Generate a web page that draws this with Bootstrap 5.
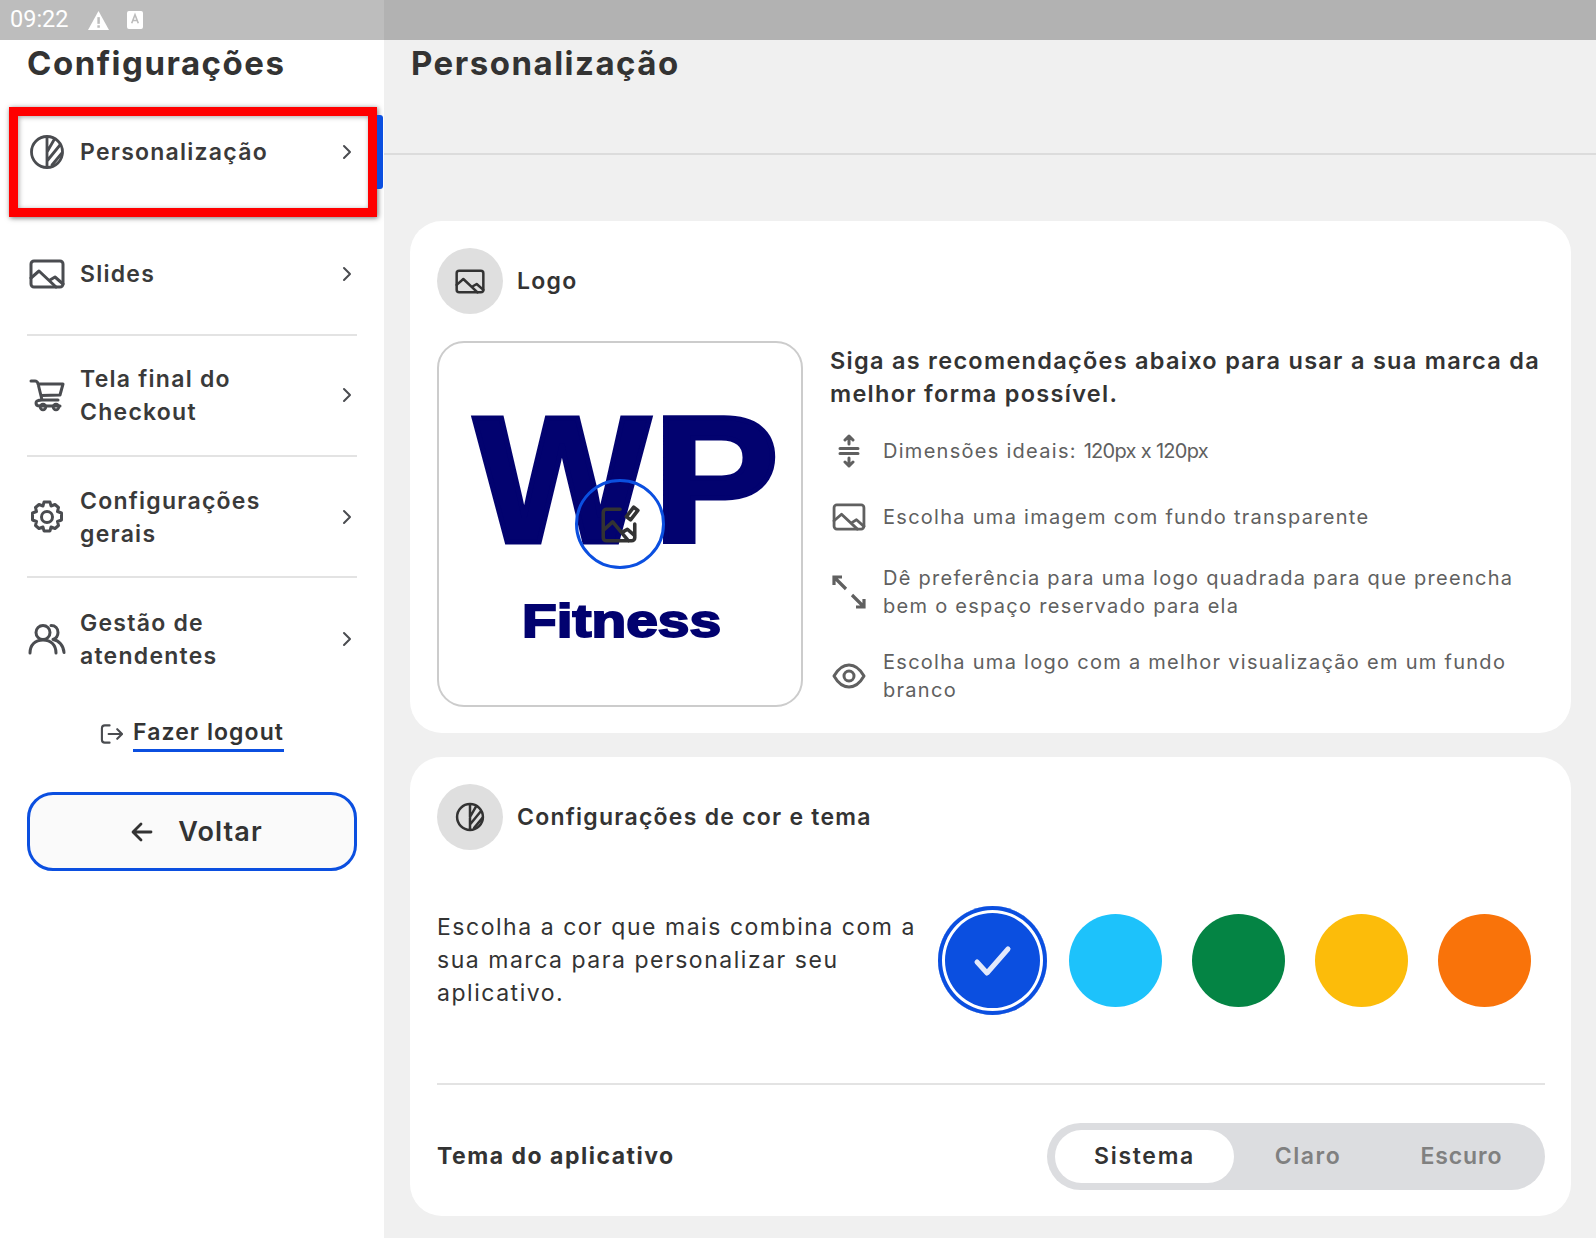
<!doctype html>
<html lang="pt-BR">
<head>
<meta charset="utf-8">
<title>Configurações</title>
<link rel="stylesheet" href="https://cdn.jsdelivr.net/npm/bootstrap@5.3.0/dist/css/bootstrap.min.css">
<style>
html,body{height:1238px;overflow:hidden}
body{background:#f0f0f0;font-family:Inter,"Noto Sans",sans-serif;color:#333;font-size:20px}
svg{display:block;flex:none}
.ic{fill:none;stroke:currentColor;stroke-width:2;stroke-linecap:round;stroke-linejoin:round}
.statusbar{height:40px;background:#b2b2b2}
.statusleft{width:384px;background:#bdbdbd;color:#fff;padding-left:10px;gap:18px;font-family:Roboto,sans-serif;font-size:23.5px}
.shell{height:1198px}
.side{width:384px;background:#fff;padding:0 27px}
.sidetitle{font-size:33px;font-weight:700;line-height:46px;margin:0;height:51px;color:#333;letter-spacing:1.5px}
.navrow{height:121.33px;color:#4a4c50;gap:15px;position:relative;padding-left:2px}
.navrow .lbl{font-size:23px;font-weight:600;line-height:33px;color:#3a3a3a;flex:1;letter-spacing:1.25px;padding-top:2px}
.navrow.lined{border-bottom:2px solid #e3e3e3}
.navrow.first{align-items:flex-start!important;padding-top:43px;height:123.33px}
.navrow.first .chev{margin-top:10px}
.chev{margin-right:4px;color:#4a4c50}
.peoplemark{margin-left:-1px;margin-right:-1px}
.redmark{position:absolute;left:-18px;top:16px;width:368px;height:110px;border:9px solid #f00;box-shadow:1px 1px 5px rgba(0,0,0,.55),inset 1px 1px 5px rgba(0,0,0,.35);pointer-events:none}
.bluemark{position:absolute;left:350px;top:24px;width:6px;height:74px;background:#0b4fe0;border-radius:0 3px 3px 0}
.logoutrow{height:68px;gap:10px;color:#4a4c50}
.logoutlink{font-size:23px;font-weight:600;color:#333;text-decoration:none;border-bottom:3px solid #0b4fe0;line-height:34px;letter-spacing:1.08px}
.backbtn{--bs-btn-border-radius:26px;width:330px;height:79px;margin-top:24px;padding:2px 0 0 10px;background:#fafafa;border:3px solid #0b4fe0;color:#333;font-size:27px;font-weight:600;gap:25px;letter-spacing:1.1px}
.backbtn:hover{background:#fafafa;border-color:#0b4fe0;color:#333}
.content{padding:0 25px 0 26px;min-width:0}
.conthead{height:115px;margin:0 -25px 0 -26px;padding:0 0 0 27px;border-bottom:2px solid #dcdcdc}
.conttitle{font-size:33px;font-weight:700;line-height:46px;margin:0;letter-spacing:1.5px}
.panel{border:0;border-radius:32px;background:#fff;padding:27px 26px 0 27px}
.panelone{margin-top:66px;height:512px}
.paneltwo{margin-top:24px;height:459px}
.disc{width:66px;height:66px;border-radius:50%;background:#dfdfdf;color:#333}
.headrow{height:66px;gap:14px;flex-shrink:0}
.paneltitle{font-size:23px;font-weight:600;margin:0;color:#333;letter-spacing:1.25px;padding-top:2px}
.logobox{width:366px;height:366px;border:2px solid #ccc;border-radius:27px;position:relative;background:#fff;overflow:hidden}
.logoart{position:absolute;left:0;top:0}
.logoart text{font-family:"Liberation Sans",sans-serif;font-weight:700;fill:#02026f;stroke:#02026f}
.editring{position:absolute;left:136px;top:136px;width:90px;height:90px;border:3px solid #0b4fe0;border-radius:50%;color:#333}
.editicon{margin-right:2px}
.logorow{margin-top:27px}
.recs{padding-left:27px;padding-top:3px;min-width:0;flex:1}
.rechead{font-size:23.5px;font-weight:600;line-height:33px;color:#333;margin:0;letter-spacing:1.28px}
.rec{color:#606060;font-size:20px;line-height:28px;gap:15px;letter-spacing:1.28px}
.tightnum{letter-spacing:-.7px}
.recicon{width:38px;flex-shrink:0}
.colordesc{width:509px;font-size:23px;line-height:33px;color:#333;letter-spacing:1.53px;margin:0}
.colorband{height:233px;padding-bottom:12px;flex-shrink:0}
.swatches{gap:30px}
.swatch{width:93px;height:93px;border-radius:50%;border:0;padding:0}
.swatch.picked{width:109px;height:109px;background:#0b4fe0;box-shadow:inset 0 0 0 4px #0b4fe0,inset 0 0 0 7px #fff;margin-right:-8px;margin-left:-8px;color:#fff}
.swsky{background:#1dc2fb}.swgreen{background:#048444}.swamber{background:#fcbc0a}.sworange{background:#f9730a}
.rule{border-top:2px solid #e3e3e3;opacity:1;margin:0;flex-shrink:0}
.themerow{height:131px;padding-top:12px;flex-shrink:0}
.themelabel{font-size:23px;font-weight:700;color:#333;letter-spacing:1.5px}
.themetrack{width:498px;height:67px;border-radius:34px;background:#dcdde0;padding:7px 0 7px 8px}
.themeopt{font-size:23px;font-weight:600;color:#808080;height:53px;border:0;background:none;padding:0;letter-spacing:1.7px;flex-shrink:0}
.themeopt.on{background:#fff;color:#333;border-radius:27px}
.optone{width:179px}.opttwo{width:148px;letter-spacing:1.5px}.optthree{width:159px;letter-spacing:.9px}
</style>
</head>
<body>
<div class="statusbar d-flex">
  <div class="statusleft d-flex align-items-center">
    <span>09:22</span>
    <svg width="23" height="21" viewBox="0 0 24 22"><path d="M12 1 23 21H1Z" fill="#fff"/><rect x="10.8" y="7.5" width="2.6" height="7" fill="#bdbdbd"/><rect x="10.8" y="16" width="2.6" height="2.6" fill="#bdbdbd"/></svg>
    <svg width="16" height="18" viewBox="0 0 17 19" style="margin-left:-1px"><rect width="17" height="19" rx="2" fill="#fff"/><path d="M5 13 8.500 4 12 13M6.300 10h4.400" fill="none" stroke="#bdbdbd" stroke-width="1.700"/></svg>
  </div>
</div>
<div class="shell d-flex">
  <aside class="side flex-shrink-0">
    <h1 class="sidetitle">Configurações</h1>
    <nav>
      <a class="navrow first d-flex align-items-center text-decoration-none">
        <svg class="ic" width="36" height="36" viewBox="0 0 36 36"><circle cx="18" cy="18" r="15.500" stroke-width="2.800"/><path d="M18 3v30M25.500 5 18 18M31 11 18 27M33 19l-10 12" stroke-width="2.800"/></svg>
        <span class="lbl">Personalização</span>
        <svg class="ic chev" width="12" height="16" viewBox="0 0 12 16"><path d="m3 2 6 6-6 6"/></svg>
        <span class="redmark"></span><span class="bluemark"></span>
      </a>
      <a class="navrow lined d-flex align-items-center text-decoration-none">
        <svg class="ic" width="36" height="30" viewBox="0 0 36 30"><rect x="2" y="2" width="32" height="26" rx="3" stroke-width="3"/><path d="m2 19 8-7 17 16M21 21l5-3 8 7" stroke-width="3"/></svg>
        <span class="lbl">Slides</span>
        <svg class="ic chev" width="12" height="16" viewBox="0 0 12 16"><path d="m3 2 6 6-6 6"/></svg>
      </a>
      <a class="navrow lined d-flex align-items-center text-decoration-none">
        <svg class="ic" width="36" height="36" viewBox="0 0 36 36"><path d="M2 4h4c1.500 0 2.500 1 3 2.500L13 23H29M9 7h25l-3 11-19 .500M13 23c-4 0-6 1-6 3s2 3 4 3H31" stroke-width="3"/><circle cx="14" cy="30" r="2.800" stroke-width="2.800"/><circle cx="27" cy="30" r="2.800" stroke-width="2.800"/></svg>
        <span class="lbl">Tela final do<br>Checkout</span>
        <svg class="ic chev" width="12" height="16" viewBox="0 0 12 16"><path d="m3 2 6 6-6 6"/></svg>
      </a>
      <a class="navrow lined d-flex align-items-center text-decoration-none">
        <svg class="ic" width="36" height="36" viewBox="0 0 36 36"><circle cx="18" cy="18" r="5.500" stroke-width="3"/><path d="M15 3h6l1 4 4-1.500 3.500 3-1 4 4 1.500v7l-4 1.500 1 4-3.500 3-4-1.500-1 4h-6l-1-4-4 1.500-3.500-3 1-4-4-1.500v-7l4-1.500-1-4 3.500-3 4 1.500Z" stroke-width="3"/></svg>
        <span class="lbl">Configurações<br>gerais</span>
        <svg class="ic chev" width="12" height="16" viewBox="0 0 12 16"><path d="m3 2 6 6-6 6"/></svg>
      </a>
      <a class="navrow d-flex align-items-center text-decoration-none">
        <svg class="ic peoplemark" width="38" height="32" viewBox="0 0 38 32"><circle cx="15" cy="9.500" r="7" stroke-width="3"/><path d="M2 30c0-8 5-13 13-13s13 5 13 13M23 2.500c4.500 0 7 3 7 7 0 3.500-2.500 6-5 7 6 1 10.500 6 11 13" stroke-width="3"/></svg>
        <span class="lbl">Gestão de<br>atendentes</span>
        <svg class="ic chev" width="12" height="16" viewBox="0 0 12 16"><path d="m3 2 6 6-6 6"/></svg>
      </a>
    </nav>
    <div class="logoutrow d-flex align-items-center justify-content-center">
      <svg class="ic" width="23" height="22" viewBox="0 0 24 22"><path d="M10 2H5a3 3 0 0 0-3 3v12a3 3 0 0 0 3 3h5M9 11h13M18 6l5 5-5 5" stroke-width="2.200"/></svg>
      <a class="logoutlink" href="#">Fazer logout</a>
    </div>
    <button class="btn backbtn d-flex align-items-center justify-content-center" type="button">
      <svg class="ic" width="22" height="20" viewBox="0 0 22 20"><path d="M20 10H3M10 2l-8 8 8 8" stroke-width="2.800"/></svg>
      <span>Voltar</span>
    </button>
  </aside>
  <main class="content flex-grow-1">
    <div class="conthead"><h2 class="conttitle">Personalização</h2></div>
    <section class="card panel panelone">
      <div class="d-flex align-items-center headrow">
        <div class="disc d-flex align-items-center justify-content-center">
          <svg class="ic" width="30" height="25" viewBox="0 0 36 30"><rect x="2" y="2" width="32" height="26" rx="3" stroke-width="3"/><path d="m2 19 8-7 17 16M21 21l5-3 8 7" stroke-width="3"/></svg>
        </div>
        <h3 class="paneltitle">Logo</h3>
      </div>
      <div class="d-flex logorow">
        <div class="logobox flex-shrink-0">
          <svg class="logoart" width="362" height="362" viewBox="0 0 362 362">
            <text x="35" y="199" font-size="180" textLength="176" lengthAdjust="spacingAndGlyphs" stroke-width="5">W</text>
            <text x="214" y="199" font-size="180" textLength="126" lengthAdjust="spacingAndGlyphs" stroke-width="5">P</text>
            <text x="83" y="294" font-size="47" textLength="199" lengthAdjust="spacingAndGlyphs" stroke-width="2">Fitness</text>
          </svg>
          <div class="editring d-flex align-items-center justify-content-center">
            <svg class="ic editicon" width="42" height="42" viewBox="0 0 40 40"><path d="M21 6H8a3 3 0 0 0-3 3v24a3 3 0 0 0 3 3h24a3 3 0 0 0 3-3V20M5 26l9-8 15 18M23 28l5-3 7 6" stroke-width="3.400"/><path d="m27 13 7-9 4 3-7 9Z" stroke-width="3.400"/></svg>
          </div>
        </div>
        <div class="recs">
          <p class="rechead">Siga as recomendações abaixo para usar a sua marca da melhor forma possível.</p>
          <div class="rec d-flex align-items-center" style="margin-top:24px">
            <div class="recicon d-flex justify-content-center"><svg class="ic" width="22" height="34" viewBox="0 0 22 34"><path d="M2 14.500h18M2 19.500h18M11 2v8M7 6l4-4 4 4M11 32v-8M7 28l4 4 4-4" stroke-width="3"/></svg></div>
            <span>Dimensões ideais: <span class="tightnum">120px x 120px</span></span>
          </div>
          <div class="rec d-flex align-items-center" style="margin-top:35px">
            <div class="recicon d-flex justify-content-center"><svg class="ic" width="34" height="28" viewBox="0 0 36 30"><rect x="2" y="2" width="32" height="26" rx="3" stroke-width="3"/><path d="m2 19 8-7 17 16M21 21l5-3 8 7" stroke-width="3"/></svg></div>
            <span>Escolha uma imagem com fundo transparente</span>
          </div>
          <div class="rec d-flex align-items-center" style="margin-top:33px">
            <div class="recicon d-flex justify-content-center"><svg class="ic" width="36" height="36" viewBox="0 0 36 36"><path d="M3 3l12 12M21 21l12 12M3 11V3h8M33 25v8h-8" stroke-width="3.200" stroke-linecap="butt" stroke-linejoin="miter"/></svg></div>
            <span>Dê preferência para uma logo quadrada para que preencha bem o espaço reservado para ela</span>
          </div>
          <div class="rec d-flex align-items-center" style="margin-top:28px">
            <div class="recicon d-flex justify-content-center"><svg class="ic" width="34" height="26" viewBox="0 0 34 26"><path d="M2 13C6 6 11 2 17 2s11 4 15 11c-4 7-9 11-15 11S6 20 2 13Z" stroke-width="3"/><circle cx="17" cy="13" r="5" stroke-width="3"/></svg></div>
            <span>Escolha uma logo com a melhor visualização em um fundo branco</span>
          </div>
        </div>
      </div>
    </section>
    <section class="card panel paneltwo">
      <div class="d-flex align-items-center headrow">
        <div class="disc d-flex align-items-center justify-content-center">
          <svg class="ic" width="30" height="30" viewBox="0 0 36 36"><circle cx="18" cy="18" r="15.500" stroke-width="3"/><path d="M18 3v30M25.500 5 18 18M31 11 18 27M33 19l-10 12" stroke-width="3"/></svg>
        </div>
        <h3 class="paneltitle">Configurações de cor e tema</h3>
      </div>
      <div class="colorband d-flex align-items-center">
        <p class="colordesc flex-shrink-0">Escolha a cor que mais combina com a sua marca para personalizar seu aplicativo.</p>
        <div class="swatches d-flex align-items-center">
          <button class="swatch picked d-flex align-items-center justify-content-center" type="button" aria-label="Azul">
            <svg class="ic" width="40" height="32" viewBox="0 0 40 32"><path d="m4 17 10 11L35 4" stroke="#e3e9fb" stroke-width="5"/></svg>
          </button>
          <button class="swatch swsky" type="button" aria-label="Azul claro"></button>
          <button class="swatch swgreen" type="button" aria-label="Verde"></button>
          <button class="swatch swamber" type="button" aria-label="Amarelo"></button>
          <button class="swatch sworange" type="button" aria-label="Laranja"></button>
        </div>
      </div>
      <hr class="rule">
      <div class="themerow d-flex align-items-center justify-content-between">
        <span class="themelabel">Tema do aplicativo</span>
        <div class="themetrack d-flex align-items-center">
          <button class="themeopt optone on" type="button">Sistema</button>
          <button class="themeopt opttwo" type="button">Claro</button>
          <button class="themeopt optthree" type="button">Escuro</button>
        </div>
      </div>
    </section>
  </main>
</div>
<script src="https://cdn.jsdelivr.net/npm/bootstrap@5.3.0/dist/js/bootstrap.bundle.min.js"></script>
</body>
</html>
